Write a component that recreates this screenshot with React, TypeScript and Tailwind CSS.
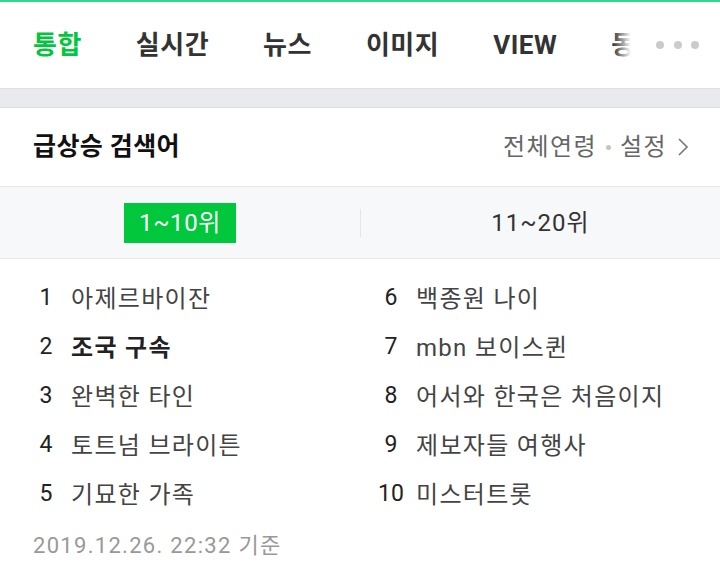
import React from "react";

const left = [
  { n: "1", t: "아제르바이잔" },
  { n: "2", t: "조국 구속", bold: true },
  { n: "3", t: "완벽한 타인" },
  { n: "4", t: "토트넘 브라이튼" },
  { n: "5", t: "기묘한 가족" },
];
const right = [
  { n: "6", t: "백종원 나이" },
  { n: "7", t: "mbn 보이스퀸" },
  { n: "8", t: "어서와 한국은 처음이지" },
  { n: "9", t: "제보자들 여행사" },
  { n: "10", t: "미스터트롯" },
];

function Row({ n, t, bold }: { n: string; t: string; bold?: boolean }) {
  return (
    <div className="flex items-center h-[49px]">
      <span className="w-[26px] text-center text-[23px] text-[#222]">{n}</span>
      <span
        className={
          "ml-[12px] whitespace-nowrap text-[24px] tracking-[1.3px] " +
          (bold ? "font-bold text-[#222]" : "text-[#444]")
        }
      >
        {t}
      </span>
    </div>
  );
}

export default function App() {
  return (
    <div
      className="w-[720px] h-[570px] bg-white overflow-hidden"
      style={{ fontFamily: 'Roboto, "Noto Sans CJK KR", sans-serif' }}
    >
      <div className="h-[2px] bg-[#2bd98a]" />
      <div className="relative h-[86px] overflow-hidden">
        <div className="flex items-center h-full pl-[33px] gap-[54px] text-[26px] font-bold text-[#333] tracking-[0.5px] whitespace-nowrap">
          <span className="text-[#00c73c]">통합</span>
          <span>실시간</span>
          <span>뉴스</span>
          <span>이미지</span>
          <span>VIEW</span>
          <span>동영상</span>
        </div>
        <div className="absolute top-0 left-[613px] h-full w-[107px] flex items-center">
          <div className="h-full w-[18px] bg-gradient-to-r from-white/0 to-white" />
          <div className="h-full flex-1 bg-white flex items-center pl-[25px] gap-[9.5px]">
            <span className="w-[8px] h-[8px] rounded-full bg-[#cbcbcb]" />
            <span className="w-[8px] h-[8px] rounded-full bg-[#cbcbcb]" />
            <span className="w-[8px] h-[8px] rounded-full bg-[#cbcbcb]" />
          </div>
        </div>
      </div>
      <div className="h-[20px] bg-[#e8eaed] border-y border-[#dcdee1]" />
      <div className="h-[78px] flex items-center justify-between pl-[33px] pr-[31px]">
        <span className="text-[25px] font-bold text-[#111] tracking-[0.4px]">급상승 검색어</span>
        <span className="flex items-center text-[24px] text-[#666] tracking-[1.4px]">
          전체연령
          <span className="mx-[9px] w-[5px] h-[5px] rounded-full bg-[#c4c4c4]" />
          설정
          <svg width="12" height="22" viewBox="0 0 12 22" className="ml-[10px]">
            <path d="M2 3 L10 11 L2 19" fill="none" stroke="#777" strokeWidth="1.6" />
          </svg>
        </span>
      </div>
      <div className="h-[73px] bg-[#f7f8fa] border-y border-[#e7e9ec] flex items-center">
        <div className="w-[360px] flex justify-center">
          <span className="w-[112px] h-[40px] bg-[#00c73c] text-white text-[24px] tracking-[0.6px] flex items-center justify-center">
            1~10위
          </span>
        </div>
        <div className="w-px h-[28px] bg-[#e3e5e8]" />
        <div className="flex-1 flex justify-center text-[24px] tracking-[1px] text-[#333]">11~20위</div>
      </div>
      <div className="grid grid-cols-[345px_1fr] pl-[33px] pt-[15px]">
        <div>
          {left.map((r) => (
            <Row key={r.n} {...r} />
          ))}
        </div>
        <div>
          {right.map((r) => (
            <Row key={r.n} {...r} />
          ))}
        </div>
      </div>
      <div className="pl-[33px] mt-[10px] text-[22px] tracking-[1.3px] text-[#999]">2019.12.26. 22:32 기준</div>
    </div>
  );
}
